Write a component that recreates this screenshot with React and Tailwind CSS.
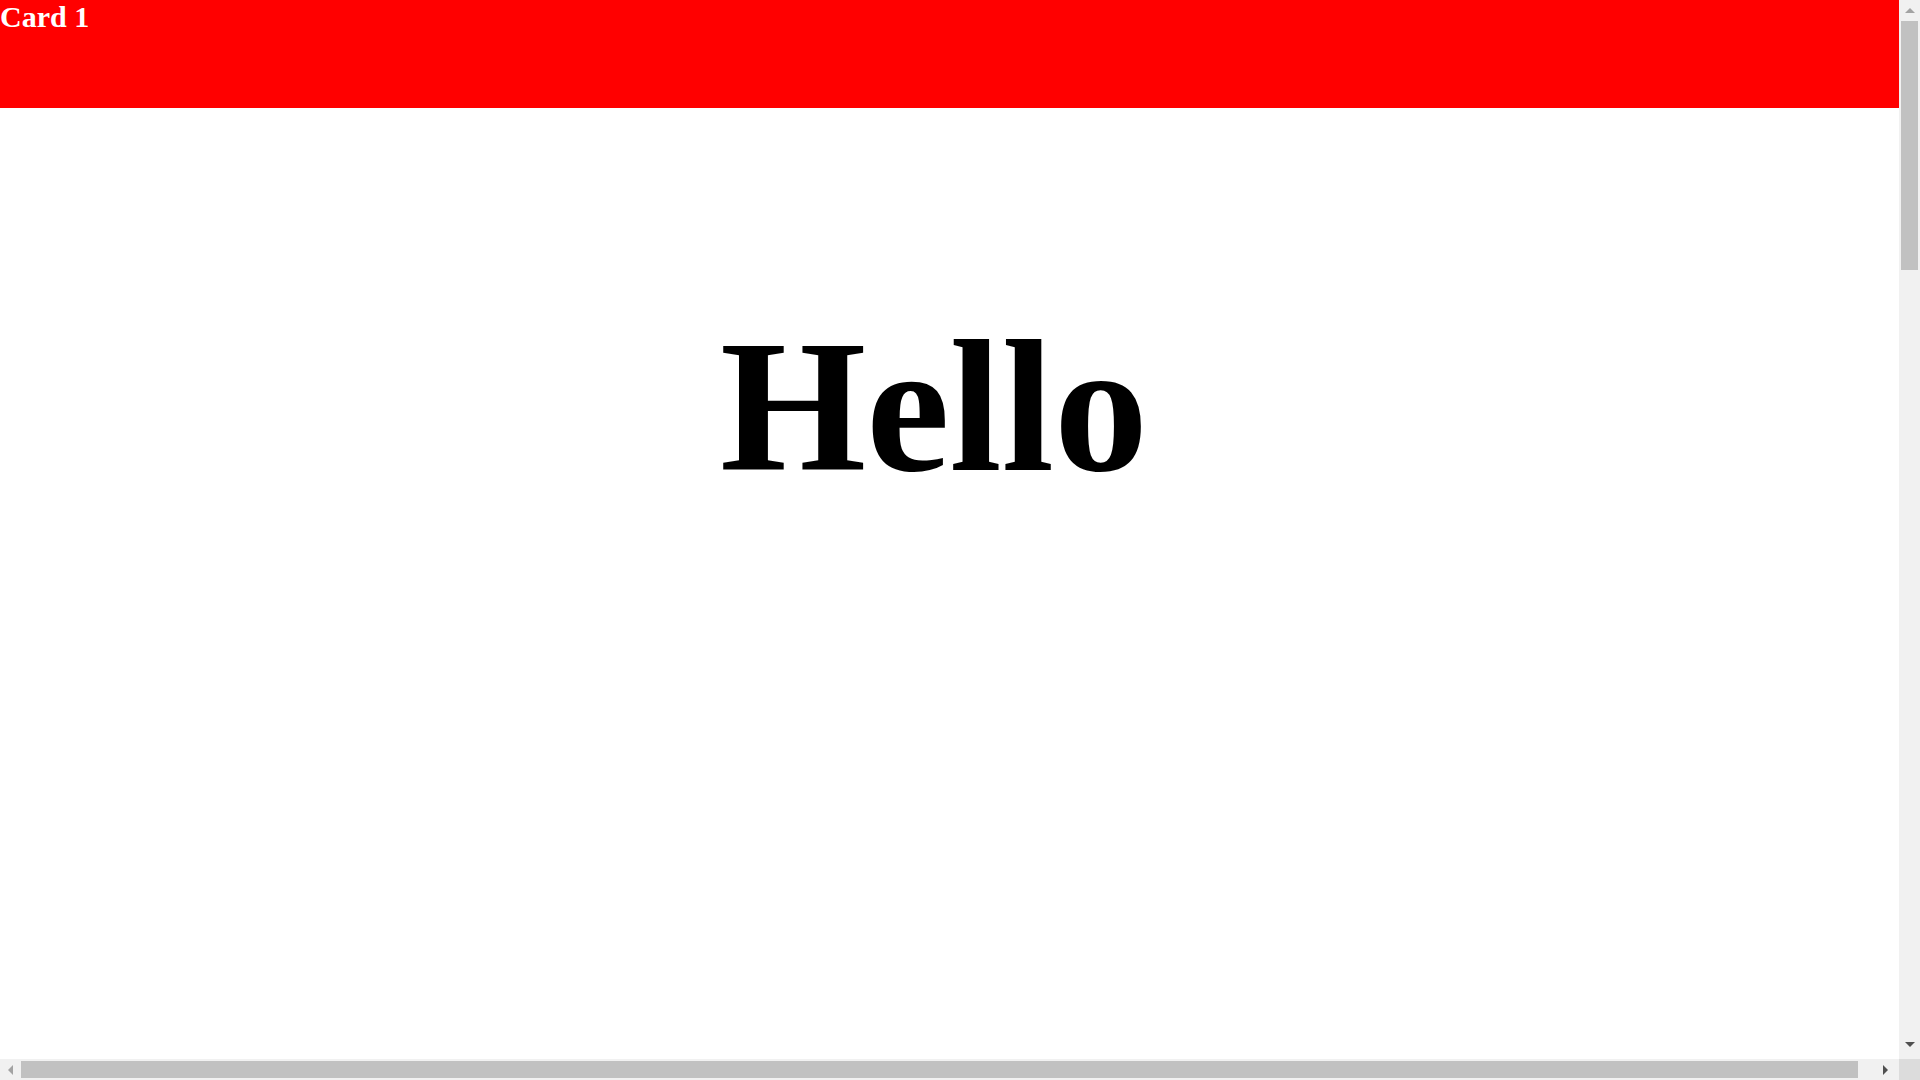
function Arrow({ dir, className }) {
  const points = {
    up: "0,5 5,0 10,5",
    down: "0,0 10,0 5,5",
    left: "5,0 5,10 0,5",
    right: "0,0 5,5 0,10",
  }[dir];
  const vertical = dir === "up" || dir === "down";
  return (
    <svg
      width={vertical ? 10 : 5}
      height={vertical ? 5 : 10}
      viewBox={vertical ? "0 0 10 5" : "0 0 5 10"}
      className={className}
    >
      <polygon points={points} fill="currentColor" />
    </svg>
  );
}

export default function App() {
  return (
    <div className="flex h-screen w-screen flex-col overflow-hidden bg-white font-['Liberation_Serif',_'Times_New_Roman',_serif]">
      <div className="flex min-h-0 flex-1">
        {/* Page (first card in view) */}
        <main className="min-w-0 flex-1 overflow-hidden">
          <section className="flex h-full w-[1920px] flex-col">
            <div className="h-[108px] bg-[#ff0000]">
              <h2 className="text-[30px] font-bold leading-[normal] text-white">
                Card 1
              </h2>
            </div>
            <div className="flex-1 pt-[190px] pr-[52px]">
              <h1 className="text-center text-[188px] font-bold leading-[normal] text-black">
                Hello
              </h1>
            </div>
          </section>
        </main>

        {/* Vertical scrollbar */}
        <div className="flex w-[21px] flex-col items-center bg-[#f1f1f1]">
          <div className="flex h-[21px] items-center justify-center">
            <Arrow dir="up" className="text-[#a3a3a3]" />
          </div>
          <div className="w-full flex-1 px-[2px]">
            <div className="h-[249px] w-full bg-[#c1c1c1]" />
          </div>
          <div className="flex h-[21px] items-start justify-center pt-[4px]">
            <Arrow dir="down" className="text-[#505050]" />
          </div>
        </div>
      </div>

      {/* Horizontal scrollbar */}
      <div className="flex h-[21px]">
        <div className="flex flex-1 items-center bg-[#f1f1f1]">
          <div className="flex h-full w-[21px] items-center justify-center">
            <Arrow dir="left" className="text-[#a3a3a3]" />
          </div>
          <div className="flex h-full flex-1 items-center">
            <div className="h-[17px] w-[1837px] bg-[#c1c1c1]" />
          </div>
          <div className="flex h-full w-[21px] items-center justify-start pl-[5px]">
            <Arrow dir="right" className="text-[#505050]" />
          </div>
        </div>
        <div className="w-[21px] bg-[#dcdcdc]" />
      </div>
    </div>
  );
}
